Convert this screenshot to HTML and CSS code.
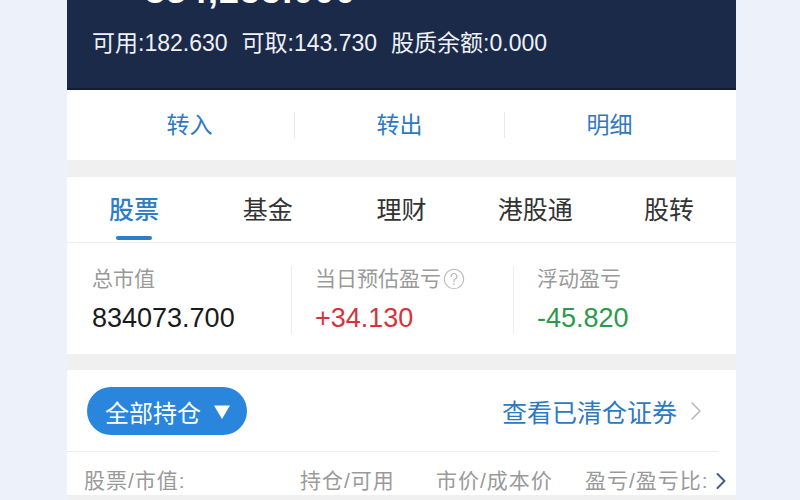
FILE: index.html
```html
<!DOCTYPE html>
<html lang="zh-CN">
<head>
<meta charset="utf-8">
<title>资金账户</title>
<link rel="stylesheet" href="styles.css">
</head>
<body>
<div class="phone">
  <header class="account">
    <div class="total">834,255.000</div>
    <div class="funds">
      <span>可用:182.630</span>
      <span>可取:143.730</span>
      <span>股质余额:0.000</span>
    </div>
  </header>

  <nav class="actions">
    <a class="action first">转入</a>
    <a class="action mid">转出</a>
    <a class="action last">明细</a>
  </nav>

  <section class="card summary">
    <div class="tabs">
      <div class="tab active">股票</div>
      <div class="tab">基金</div>
      <div class="tab">理财</div>
      <div class="tab">港股通</div>
      <div class="tab">股转</div>
    </div>
    <div class="stats">
      <div class="stat">
        <div class="label">总市值</div>
        <div class="value">834073.700</div>
      </div>
      <div class="stat sep">
        <div class="label">当日预估盈亏<svg class="help" viewBox="0 0 20 20" width="22" height="22"><circle cx="10" cy="10" r="8.8" fill="none" stroke="#b8b8b8" stroke-width="1"/><path d="M7.4 7.6a2.6 2.6 0 1 1 3.6 2.4c-0.7 0.3-1 0.8-1 1.5v0.9" fill="none" stroke="#b8b8b8" stroke-width="1.1" stroke-linecap="round"/><circle cx="10" cy="14.6" r="0.8" fill="#b8b8b8"/></svg></div>
        <div class="value up">+34.130</div>
      </div>
      <div class="stat sep">
        <div class="label">浮动盈亏</div>
        <div class="value down">-45.820</div>
      </div>
    </div>
  </section>

  <section class="card positions">
    <div class="filter-row">
      <button class="pill">全部持仓<svg class="tri" viewBox="0 0 18 16" width="18" height="16"><path d="M1 1.5h16L9 15z" fill="#fff"/></svg></button>
      <a class="cleared">查看已清仓证券<svg class="chev" viewBox="0 0 12 20" width="12" height="20"><path d="M2 2l8 8-8 8" fill="none" stroke="#b8b8b8" stroke-width="1.6" stroke-linecap="round" stroke-linejoin="round"/></svg></a>
    </div>
    <div class="cols">
      <span class="col c1">股票/市值:</span>
      <span class="col c2">持仓/可用</span>
      <span class="col c3">市价/成本价</span>
      <span class="col c4">盈亏/盈亏比:</span>
      <svg class="more" viewBox="0 0 12 18" width="12" height="18"><path d="M2.5 2l7 7-7 7" fill="none" stroke="#3d5f8c" stroke-width="2" stroke-linecap="round" stroke-linejoin="round"/></svg>
    </div>
  </section>
</div>
</body>
</html>
```
FILE: styles.css
```css
* { box-sizing: border-box; }
html, body { margin: 0; padding: 0; }
body {
  background: #edf2fa;
  font-family: "Liberation Sans", "Noto Sans CJK SC", sans-serif;
  height: 500px;
  overflow: hidden;
}
.phone {
  width: 669px;
  margin-left: 67px;
  background: #f0f0f0;
  min-height: 500px;
}
.account {
  height: 90px;
  background: #1c2a4a;
  padding-left: 25px;
  color: #eef1f6;
  overflow: hidden;
  border-bottom: 2px solid #141d33;
}
.total {
  margin-top: -29px;
  margin-left: 53px;
  font-size: 36px;
  line-height: 40px;
  font-weight: bold;
  color: #fff;
  letter-spacing: 1px;
}
.funds {
  margin-top: 19px;
  display: flex;
  gap: 14px;
  font-size: 23px;
  line-height: 26px;
}
.actions {
  height: 70px;
  background: #fff;
  display: flex;
  align-items: center;
  margin-bottom: 17px;
}
.action {
  flex: 1;
  height: 26px;
  line-height: 26px;
  text-align: center;
  font-size: 23px;
  color: #2f78c2;
}
.action.first { padding-left: 18px; }
.action.mid, .action.last { border-left: 1px solid #e8e8e8; }
.action.last { padding-right: 22px; }
.card { background: #fff; }
.summary { margin-bottom: 16px; }
.tabs {
  height: 66px;
  display: grid;
  grid-template-columns: repeat(5, 1fr);
  border-bottom: 1px solid #eeeeee;
}
.tab {
  position: relative;
  text-align: center;
  font-size: 25px;
  line-height: 30px;
  padding-top: 18px;
  color: #333;
}
.tab.active { color: #2f7dc5; font-weight: 500; }
.tab.active::after {
  content: "";
  position: absolute;
  left: 50%;
  top: 59px;
  width: 36px;
  height: 4px;
  margin-left: -18px;
  border-radius: 2px;
  background: #2f7dc5;
}
.stats {
  display: grid;
  grid-template-columns: 224px 222px 1fr;
  padding: 23px 0 20px;
}
.stat { padding-left: 25px; }
.stat.sep { padding-left: 23px; border-left: 1px solid #ececec; }
.label {
  font-size: 21px;
  line-height: 26px;
  color: #9a9a9a;
  display: flex;
  align-items: center;
}
.help { margin-left: 2px; }
.value {
  margin-top: 10px;
  font-size: 27px;
  line-height: 32px;
  color: #1a1a1a;
}
.value.up { color: #d5343c; }
.value.down { color: #2b9a4a; }
.filter-row {
  display: flex;
  align-items: center;
  justify-content: space-between;
  padding: 17px 16px 16px 20px;
  margin-right: 18px;
  border-bottom: 1px solid #eeeeee;
}
.pill {
  width: 160px;
  height: 48px;
  border: none;
  border-radius: 24px;
  background: #2a86dc;
  color: #fff;
  font-family: inherit;
  font-size: 24px;
  display: flex;
  align-items: center;
  justify-content: center;
  gap: 12px;
  padding: 0 0 0 2px;
}
.tri { margin-top: 1px; }
.cleared {
  display: flex;
  align-items: center;
  gap: 13px;
  font-size: 25px;
  color: #2f78c2;
}
.cols {
  display: grid;
  grid-template-columns: 216px 136px 149px 130px 12px;
  align-items: center;
  padding: 15px 0 0 17px;
  font-size: 21px;
  line-height: 28px;
  letter-spacing: 1px;
  color: #9a9a9a;
}
.col { white-space: nowrap; overflow: hidden; }
```
